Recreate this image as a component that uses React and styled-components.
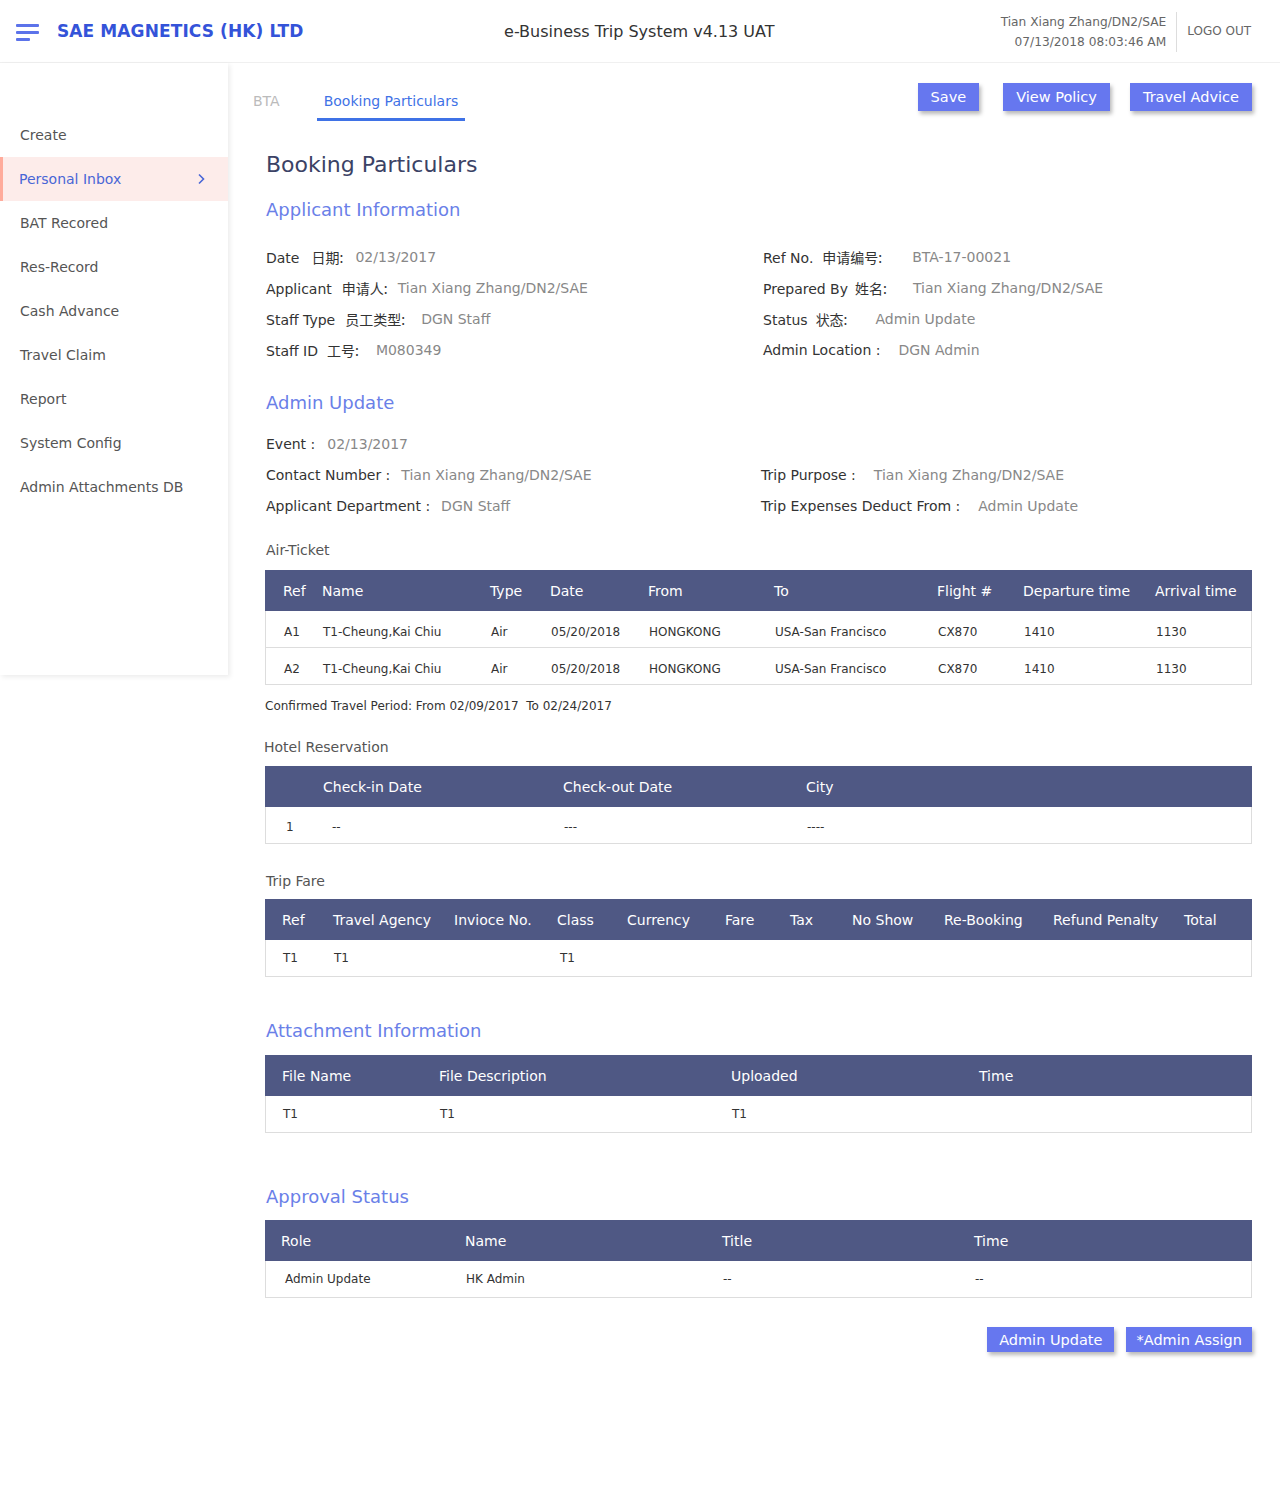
import React from "react";
import styled, { createGlobalStyle } from "styled-components";

const Global = createGlobalStyle`
  html, body { margin: 0; padding: 0; background: #fff; }
  body { font-family: "DejaVu Sans", Verdana, "Noto Sans CJK SC", sans-serif; color: #333; }
  * { box-sizing: border-box; }
`;

const Header = styled.header`
  height: 63px;
  display: flex;
  align-items: center;
  border-bottom: 1px solid #f0f0f0;
`;
const Brand = styled.div`
  display: flex;
  align-items: center;
  padding-left: 16px;
  width: 400px;
`;
const Burger = styled.div`
  display: flex;
  flex-direction: column;
  gap: 4px;
  width: 23px;
  margin-right: 18px;
  margin-top: 2px;
`;
const BurgerLine = styled.span`
  display: block;
  height: 3px;
  border-radius: 1px;
  background: #5c73ea;
  width: ${(p) => p.$w}px;
`;
const BrandName = styled.div`
  font-weight: bold;
  font-size: 17px;
  letter-spacing: 0.1px;
  color: #3453d9;
`;
const SystemTitle = styled.div`
  flex: 1;
  text-align: center;
  font-size: 16px;
  color: #333;
  padding-right: 122px;
`;
const UserBox = styled.div`
  display: flex;
  align-items: center;
  padding-right: 29px;
`;
const UserInfo = styled.div`
  text-align: right;
  font-size: 12.2px;
  color: #666;
  line-height: 20px;
  padding-right: 10px;
  border-right: 1px solid #ddd;
  margin-right: 10px;
  margin-top: 1px;
`;
const Logout = styled.div`
  font-size: 12px;
  color: #666;
`;

const Body = styled.div`
  display: flex;
  align-items: flex-start;
`;
const Sidebar = styled.nav`
  width: 228px;
  height: 612px;
  flex-shrink: 0;
  padding-top: 50px;
  box-shadow: 2px 2px 5px rgba(0, 0, 0, 0.08);
  background: #fff;
`;
const NavItem = styled.div`
  height: 44px;
  display: flex;
  align-items: center;
  justify-content: space-between;
  padding: 0 22px 0 ${(p) => (p.$active ? 16 : 20)}px;
  font-size: 14px;
  color: ${(p) => (p.$active ? "#4966d6" : "#555")};
  background: ${(p) => (p.$active ? "#fdecea" : "transparent")};
  border-left: ${(p) => (p.$active ? "3px solid #ffab9b" : "none")};
`;

const Main = styled.main`
  flex: 1;
  padding: 20px 28px 120px 18px;
`;
const TopBar = styled.div`
  display: flex;
  justify-content: space-between;
  align-items: flex-start;
`;
const Tabs = styled.div`
  display: flex;
  gap: 30px;
`;
const Tab = styled.div`
  padding: 9px 7px 8px;
  line-height: 18px;
  font-size: 14px;
  color: ${(p) => (p.$active ? "#3f72e6" : "#bbb")};
  border-bottom: 3px solid ${(p) => (p.$active ? "#3f72e6" : "transparent")};
`;
const Actions = styled.div`
  display: flex;
  gap: ${(p) => p.$gap || 22}px;
  justify-content: flex-end;
  margin-top: ${(p) => p.$mt || 0}px;
  width: ${(p) => (p.$w ? `${p.$w}px` : "auto")};
`;
const Button = styled.button`
  height: ${(p) => p.$h || 28}px;
  padding: 0 ${(p) => p.$px || 13}px;
  margin-right: ${(p) => p.$mr || 0}px;
  border: none;
  background: #6677ef;
  color: #fff;
  font-family: inherit;
  font-size: 14.5px;
  box-shadow: 2px 3px 4px rgba(0, 0, 0, 0.28);
  cursor: pointer;
`;

const Content = styled.div`
  padding-left: 19px;
`;
const PageTitle = styled.h1`
  margin: 30px 0 0 1px;
  font-size: 22px;
  line-height: 28px;
  font-weight: normal;
  color: #3b4265;
`;
const SectionTitle = styled.h2`
  margin: ${(p) => p.$mt}px 0 ${(p) => p.$mb}px 1px;
  font-size: 18px;
  line-height: 24px;
  font-weight: normal;
  color: #6a80e8;
`;
const InfoGrid = styled.div`
  display: grid;
  grid-template-columns: ${(p) => p.$left || 497}px 1fr;
`;
const InfoRow = styled.div`
  height: 31px;
  display: flex;
  align-items: center;
  font-size: 14px;
  padding-left: 1px;
  grid-column: ${(p) => (p.$full ? "1 / span 2" : "auto")};
`;
const Label = styled.span`
  color: #333;
  white-space: pre;
`;
const Cn = styled.span`
  margin-left: ${(p) => p.$ml ?? 10}px;
  font-family: "Noto Sans CJK SC", sans-serif;
  font-size: 14px;
`;
const Value = styled.span`
  color: #888;
  margin-left: ${(p) => p.$ml ?? 11}px;
`;
const SubLabel = styled.div`
  margin: ${(p) => p.$mt}px 0 ${(p) => p.$mb}px ${(p) => p.$ml ?? 1}px;
  font-size: 14px;
  line-height: 18px;
  color: #555;
`;
const Note = styled.div`
  margin: 13px 0 0;
  font-size: 12px;
  line-height: 16px;
  color: #333;
`;

const TableWrap = styled.div`
  width: 987px;
`;
const HeadRow = styled.div`
  display: grid;
  grid-template-columns: ${(p) => p.$cols};
  padding-left: ${(p) => p.$pad}px;
  height: 41px;
  align-items: center;
  background: #4f5884;
  color: #fff;
  font-size: 14px;
`;
const BodyRow = styled.div`
  display: grid;
  grid-template-columns: ${(p) => p.$cols};
  padding-left: ${(p) => p.$pad}px;
  padding-top: ${(p) => p.$shift || 0}px;
  height: 37px;
  align-items: center;
  border: 1px solid #ddd;
  border-top: none;
  font-size: 12px;
  color: #333;
`;
const Cell = styled.div`
  white-space: nowrap;
  padding-left: ${(p) => p.$indent || 0}px;
`;

const Chevron = () => (
  <svg width="9" height="12" viewBox="0 0 9 12">
    <path d="M2 1.5 L6.5 6 L2 10.5" fill="none" stroke="#4966d6" strokeWidth="1.6" />
  </svg>
);

function DataTable({ cols, pad, headers, rows, indents = {}, shift }) {
  return (
    <TableWrap>
      <HeadRow $cols={cols} $pad={pad}>
        {headers.map((h, i) => (
          <Cell key={i}>{h}</Cell>
        ))}
      </HeadRow>
      {rows.map((r, ri) => (
        <BodyRow key={ri} $cols={cols} $pad={pad} $shift={shift}>
          {r.map((c, ci) => (
            <Cell key={ci} $indent={indents[ci]}>
              {c}
            </Cell>
          ))}
        </BodyRow>
      ))}
    </TableWrap>
  );
}

const navItems = [
  "Create",
  "Personal Inbox",
  "BAT Recored",
  "Res-Record",
  "Cash Advance",
  "Travel Claim",
  "Report",
  "System Config",
  "Admin Attachments DB",
];

const airRow = (ref) => [ref, "T1-Cheung,Kai Chiu", "Air", "05/20/2018", "HONGKONG", "USA-San Francisco", "CX870", "1410", "1130"];

export default function App() {
  return (
    <>
      <Global />
      <Header>
        <Brand>
          <Burger>
            <BurgerLine $w={23} />
            <BurgerLine $w={23} />
            <BurgerLine $w={14} />
          </Burger>
          <BrandName>SAE MAGNETICS (HK) LTD</BrandName>
        </Brand>
        <SystemTitle>e-Business Trip System v4.13 UAT</SystemTitle>
        <UserBox>
          <UserInfo>
            <div>Tian Xiang Zhang/DN2/SAE</div>
            <div>07/13/2018 08:03:46 AM</div>
          </UserInfo>
          <Logout>LOGO OUT</Logout>
        </UserBox>
      </Header>
      <Body>
        <Sidebar>
          {navItems.map((n) => (
            <NavItem key={n} $active={n === "Personal Inbox"}>
              <span>{n}</span>
              {n === "Personal Inbox" && <Chevron />}
            </NavItem>
          ))}
        </Sidebar>
        <Main>
          <TopBar>
            <Tabs>
              <Tab>BTA</Tab>
              <Tab $active>Booking Particulars</Tab>
            </Tabs>
            <Actions $gap={20}>
              <Button $mr={4}>Save</Button>
              <Button>View Policy</Button>
              <Button>Travel Advice</Button>
            </Actions>
          </TopBar>
          <Content>
            <PageTitle>Booking Particulars</PageTitle>
            <SectionTitle $mt={19} $mb={19}>Applicant Information</SectionTitle>
            <InfoGrid>
              <InfoRow>
                <Label>Date<Cn $ml={12}>日期:</Cn></Label>
                <Value $ml={12}>02/13/2017</Value>
              </InfoRow>
              <InfoRow>
                <Label>Ref No.<Cn $ml={9}>申请编号:</Cn></Label>
                <Value $ml={30}>BTA-17-00021</Value>
              </InfoRow>
              <InfoRow>
                <Label>Applicant<Cn $ml={10}>申请人:</Cn></Label>
                <Value $ml={10}>Tian Xiang Zhang/DN2/SAE</Value>
              </InfoRow>
              <InfoRow>
                <Label>Prepared By<Cn $ml={7}>姓名:</Cn></Label>
                <Value $ml={26}>Tian Xiang Zhang/DN2/SAE</Value>
              </InfoRow>
              <InfoRow>
                <Label>Staff Type<Cn $ml={10}>员工类型:</Cn></Label>
                <Value $ml={16}>DGN Staff</Value>
              </InfoRow>
              <InfoRow>
                <Label>Status<Cn $ml={8}>状态:</Cn></Label>
                <Value $ml={28}>Admin Update</Value>
              </InfoRow>
              <InfoRow>
                <Label>Staff ID<Cn $ml={9}>工号:</Cn></Label>
                <Value $ml={17}>M080349</Value>
              </InfoRow>
              <InfoRow>
                <Label>Admin Location :</Label>
                <Value $ml={18}>DGN Admin</Value>
              </InfoRow>
            </InfoGrid>
            <SectionTitle $mt={26} $mb={13}>Admin Update</SectionTitle>
            <InfoGrid $left={495}>
              <InfoRow $full>
                <Label>Event :</Label>
                <Value $ml={12}>02/13/2017</Value>
              </InfoRow>
              <InfoRow>
                <Label>Contact Number :</Label>
                <Value $ml={11}>Tian Xiang Zhang/DN2/SAE</Value>
              </InfoRow>
              <InfoRow>
                <Label>Trip Purpose :</Label>
                <Value $ml={18}>Tian Xiang Zhang/DN2/SAE</Value>
              </InfoRow>
              <InfoRow>
                <Label>Applicant Department :</Label>
                <Value $ml={11}>DGN Staff</Value>
              </InfoRow>
              <InfoRow>
                <Label>Trip Expenses Deduct From :</Label>
                <Value $ml={18}>Admin Update</Value>
              </InfoRow>
            </InfoGrid>
            <SubLabel $mt={20} $mb={11}>Air-Ticket</SubLabel>
            <DataTable
              cols="39px 168px 60px 98px 126px 163px 86px 132px 1fr"
              pad={18}
              shift={6}
              headers={["Ref", "Name", "Type", "Date", "From", "To", "Flight #", "Departure time", "Arrival time"]}
              rows={[airRow("A1"), airRow("A2")]}
            />
            <Note>Confirmed Travel Period: From 02/09/2017&nbsp; To 02/24/2017</Note>
            <SubLabel $mt={24} $mb={10} $ml={-1}>Hotel Reservation</SubLabel>
            <DataTable
              cols="38px 240px 243px 1fr"
              pad={20}
              shift={4}
              headers={["", "Check-in Date", "Check-out Date", "City"]}
              rows={[["1", "--", "---", "----"]]}
              indents={{ 1: 8 }}
            />
            <SubLabel $mt={28} $mb={9}>Trip Fare</SubLabel>
            <DataTable
              cols="51px 121px 103px 70px 98px 65px 62px 92px 109px 131px 1fr"
              pad={17}
              headers={["Ref", "Travel Agency", "Invioce No.", "Class", "Currency", "Fare", "Tax", "No Show", "Re-Booking", "Refund Penalty", "Total"]}
              rows={[["T1", "T1", "", "T1", "", "", "", "", "", "", ""]]}
              indents={{ 3: 2 }}
            />
            <SectionTitle $mt={42} $mb={12}>Attachment Information</SectionTitle>
            <DataTable
              cols="157px 292px 248px 1fr"
              pad={17}
              headers={["File Name", "File Description", "Uploaded", "Time"]}
              rows={[["T1", "T1", "T1", ""]]}
            />
            <SectionTitle $mt={52} $mb={11}>Approval Status</SectionTitle>
            <DataTable
              cols="184px 257px 252px 1fr"
              pad={16}
              headers={["Role", "Name", "Title", "Time"]}
              rows={[["Admin Update", "HK Admin", "--", "--"]]}
              indents={{ 0: 3 }}
            />
            <Actions $gap={12} $mt={29} $w={987}>
              <Button $h={25} $px={12}>Admin Update</Button>
              <Button $h={25} $px={10}>*Admin Assign</Button>
            </Actions>
          </Content>
        </Main>
      </Body>
    </>
  );
}
